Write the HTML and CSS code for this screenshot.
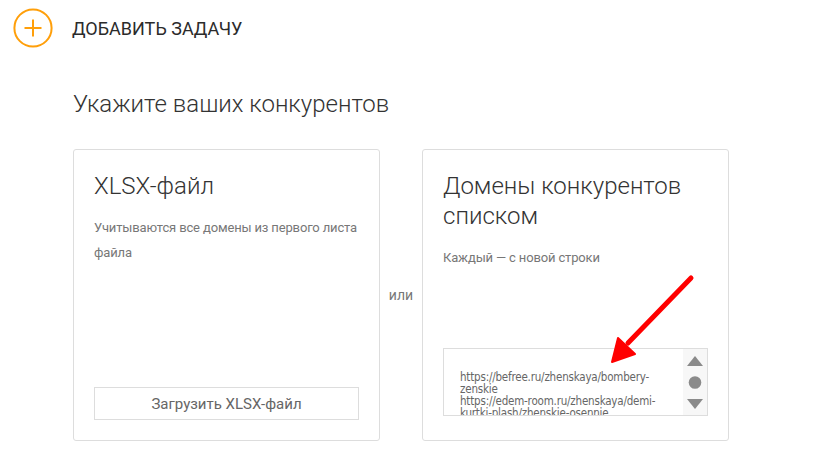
FILE: index.html
```html
<!DOCTYPE html>
<html>
  <head>
    <meta charset="UTF-8">
    <title>Добавить задачу</title>
    <link rel="stylesheet" href="styles.css">
  </head>
  <body>
    <div class="topbar">
      <span class="add-btn">
        <svg width="40" height="40" viewBox="0 0 40 40">
          <circle cx="20" cy="20" r="18.6" fill="none" stroke="#ff9f0a" stroke-width="2"/>
          <path d="M11.5 20H28.5M20 11.5V28.5" stroke="#ff9f0a" stroke-width="2"/>
        </svg>
      </span>
      <span class="add-title">ДОБАВИТЬ ЗАДАЧУ</span>
    </div>

    <div class="main">
      <h1 class="heading">Укажите ваших конкурентов</h1>

      <div class="cards">
        <div class="card">
          <h2 class="card-title">XLSX-файл</h2>
          <p class="card-text">Учитываются все домены из первого листа файла</p>
          <button class="upload">Загрузить XLSX-файл</button>
        </div>

        <div class="or">или</div>

        <div class="card">
          <h2 class="card-title">Домены конкурентов списком</h2>
          <p class="card-text">Каждый — с новой строки</p>
          <div class="domains">
            <div class="domains-text">https://befree.ru/zhenskaya/bombery-zenskie<br>https://edem-room.ru/zhenskaya/demi-kurtki-plash/zhenskie-osennie</div>
            <div class="scroll">
              <svg width="16" height="10" viewBox="0 0 16 10"><path d="M8 0L16 10H0Z" fill="#8a8a8a"/></svg>
              <svg width="14" height="13" viewBox="0 0 14 13"><circle cx="7" cy="6.5" r="6.3" fill="#8a8a8a"/></svg>
              <svg width="16" height="10" viewBox="0 0 16 10"><path d="M0 0H16L8 10Z" fill="#8a8a8a"/></svg>
            </div>
          </div>
        </div>
      </div>
    </div>

    <svg class="pointer" width="816" height="450" viewBox="0 0 816 450">
      <path d="M691 278L628 343" stroke="#ff0000" stroke-width="5" stroke-linecap="round"/>
      <path d="M612 362L618 338L635 354Z" fill="#ff0000" stroke="#ff0000" stroke-width="2" stroke-linejoin="round"/>
    </svg>
  </body>
</html>
```

FILE: styles.css
```css
body {
  margin: 0;
  font-family: Roboto, "Liberation Sans", sans-serif;
  color: #333;
  background: white;
  position: relative;
}

.topbar {
  display: flex;
  align-items: center;
  padding: 8px 0 0 13px;
}

.add-btn {
  width: 40px;
  height: 40px;
  display: flex;
}

.add-title {
  margin-left: 19px;
  font-size: 18px;
  color: #2b2b2b;
}

.main {
  padding-left: 73px;
}

.heading {
  margin: 41px 0 30px 0;
  font-size: 24px;
  line-height: 30px;
  font-weight: 300;
  color: #333;
}

.cards {
  display: flex;
  align-items: center;
}

.card {
  width: 307px;
  height: 292px;
  box-sizing: border-box;
  border: 1px solid #ddd;
  border-radius: 3px;
  padding: 21px 20px 20px 20px;
  display: flex;
  flex-direction: column;
}

.card-title {
  margin: 0;
  font-size: 24px;
  line-height: 30px;
  font-weight: 300;
  color: #333;
}

.card-text {
  margin: 14px 0 0 0;
  font-size: 13px;
  line-height: 25px;
  letter-spacing: -0.15px;
  color: #777;
}

.or {
  width: 42px;
  text-align: center;
  font-size: 14px;
  color: #777;
}

.upload {
  margin-top: auto;
  height: 33px;
  background: white;
  border: 1px solid #ddd;
  font-family: Roboto, "Liberation Sans", sans-serif;
  font-size: 15px;
  color: #666;
}

.domains {
  margin-top: auto;
  margin-bottom: 4px;
  height: 68px;
  box-sizing: border-box;
  border: 1px solid #ddd;
  display: flex;
  overflow: hidden;
}

.domains-text {
  flex: 1;
  padding: 22px 4px 0 16px;
  font-family: "DejaVu Sans Condensed", "DejaVu Sans", sans-serif;
  font-size: 11.5px;
  line-height: 12px;
  letter-spacing: -0.2px;
  color: #666;
  overflow: hidden;
}

.scroll {
  width: 24px;
  background: #f7f7f7;
  display: flex;
  flex-direction: column;
  align-items: center;
  padding-top: 7px;
  gap: 10px;
}

.pointer {
  position: absolute;
  left: 0;
  top: 0;
  pointer-events: none;
}
```
